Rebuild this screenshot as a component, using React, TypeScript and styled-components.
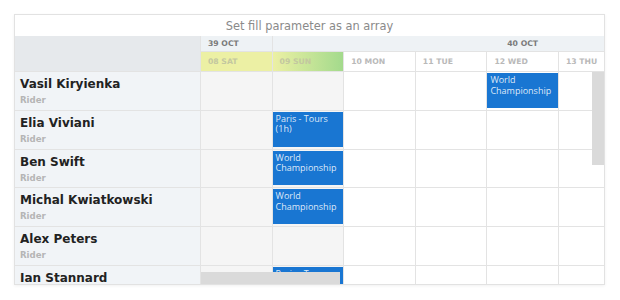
import React from "react";
import styled, { createGlobalStyle } from "styled-components";

const GlobalStyle = createGlobalStyle`
  html, body {
    margin: 0;
    padding: 0;
    background: #ffffff;
  }
  * {
    box-sizing: border-box;
  }
`;

const COL_W = 71.6;
const ROW_H = 38.8;
const LINE = "#e3e3e3";

const Page = styled.div`
  padding: 14px;
  font-family: "DejaVu Sans", sans-serif;
`;

const Frame = styled.div`
  position: relative;
  width: 591px;
  height: 271px;
  border: 1px solid #e2e2e2;
  box-shadow: 0 1px 3px rgba(0, 0, 0, 0.06);
  overflow: hidden;
  background: #ffffff;
`;

const Title = styled.div`
  height: 21px;
  display: flex;
  align-items: center;
  justify-content: center;
  font-size: 11.4px;
  color: #8a8a8a;
`;

const Grid = styled.div`
  display: grid;
  grid-template-columns: 186px repeat(8, ${COL_W}px);
  grid-template-rows: 15px 21px repeat(6, ${ROW_H}px);
`;

const CornerCell = styled.div`
  grid-row: 1 / span 2;
  background: #e6e9ec;
  border-right: 1px solid ${LINE};
  border-bottom: 1px solid ${LINE};
`;

const WeekCell = styled.div<{ span: number; centered?: boolean }>`
  grid-column: span ${(p) => p.span};
  background: #eef2f5;
  border-right: 1px solid ${LINE};
  display: flex;
  align-items: center;
  justify-content: ${(p) => (p.centered ? "center" : "flex-start")};
  padding-left: ${(p) => (p.centered ? "0" : "7px")};
  font-size: 7.7px;
  font-weight: bold;
  color: #7a7a7a;
`;

const DayCell = styled.div<{ tint: "none" | "sat" | "sun" }>`
  display: flex;
  align-items: center;
  padding-left: 7px;
  font-size: 7.7px;
  font-weight: bold;
  color: ${(p) => (p.tint === "none" ? "#b9b9b9" : "#c3c7a0")};
  white-space: nowrap;
  border-right: 1px solid ${LINE};
  border-bottom: 1px solid ${LINE};
  border-top: 1px solid ${LINE};
  background: ${(p) =>
    p.tint === "sat"
      ? "#ecf0a4"
      : p.tint === "sun"
        ? "linear-gradient(90deg, #ecf0a4 0%, #a3da8c 100%)"
        : "#ffffff"};
`;

const ResourceCell = styled.div`
  background: #f1f4f7;
  border-right: 1px solid ${LINE};
  border-bottom: 1px solid ${LINE};
  padding: 4px 5px 0;
  display: flex;
  flex-direction: column;
`;

const Name = styled.div`
  font-size: 12px;
  font-weight: bold;
  color: #222222;
  line-height: 16px;
`;

const Role = styled.div`
  font-size: 8.6px;
  font-weight: bold;
  color: #b5b5b5;
  line-height: 14px;
  margin-top: 1px;
`;

const BodyCell = styled.div<{ weekend: boolean }>`
  display: flex;
  background: ${(p) => (p.weekend ? "#f5f5f5" : "#ffffff")};
  border-right: 1px solid ${LINE};
  border-bottom: 1px solid ${LINE};
`;

const EventBox = styled.div`
  flex: 1;
  margin: 1px 0 2px 0;
  padding: 2px 3px;
  background: #1976d2;
  color: rgba(255, 255, 255, 0.86);
  font-family: "Open Sans", sans-serif;
  font-size: 9px;
  line-height: 10.5px;
  overflow: hidden;
`;

const VScroll = styled.div`
  position: absolute;
  right: 0;
  top: 57px;
  width: 12px;
  height: 93px;
  background: #dadada;
`;

const HScroll = styled.div`
  position: absolute;
  left: 186px;
  bottom: 0;
  width: 139px;
  height: 12px;
  background: #dadada;
`;

type Day = { label: string; tint: "none" | "sat" | "sun" };

// only the first six days are in view; the rest of the week is scrolled off
const days: Day[] = [
  { label: "08 SAT", tint: "sat" },
  { label: "09 SUN", tint: "sun" },
  { label: "10 MON", tint: "none" },
  { label: "11 TUE", tint: "none" },
  { label: "12 WED", tint: "none" },
  { label: "13 THU", tint: "none" },
  { label: "", tint: "none" },
  { label: "", tint: "none" },
];

type Rider = { name: string; events: Record<number, string> };

const riders: Rider[] = [
  { name: "Vasil Kiryienka", events: { 4: "World Championship" } },
  { name: "Elia Viviani", events: { 1: "Paris - Tours (1h)" } },
  { name: "Ben Swift", events: { 1: "World Championship" } },
  { name: "Michal Kwiatkowski", events: { 1: "World Championship" } },
  { name: "Alex Peters", events: {} },
  { name: "Ian Stannard", events: { 1: "Paris - Tours (1h)" } },
];

export default function App() {
  return (
    <Page>
      <GlobalStyle />
      <Frame>
        <Title>Set fill parameter as an array</Title>
        <Grid>
          <CornerCell />
          <WeekCell span={1}>39 OCT</WeekCell>
          <WeekCell span={7} centered>
            40 OCT
          </WeekCell>
          {days.map((d, i) => (
            <DayCell key={i} tint={d.tint}>
              {d.label}
            </DayCell>
          ))}
          {riders.map((r, ri) => (
            <React.Fragment key={r.name}>
              <ResourceCell>
                <Name>{r.name}</Name>
                {ri < riders.length - 1 && <Role>Rider</Role>}
              </ResourceCell>
              {days.map((d, i) => (
                <BodyCell key={i} weekend={i < 2}>
                  {r.events[i] && <EventBox>{r.events[i]}</EventBox>}
                </BodyCell>
              ))}
            </React.Fragment>
          ))}
        </Grid>
        <VScroll />
        <HScroll />
      </Frame>
    </Page>
  );
}
